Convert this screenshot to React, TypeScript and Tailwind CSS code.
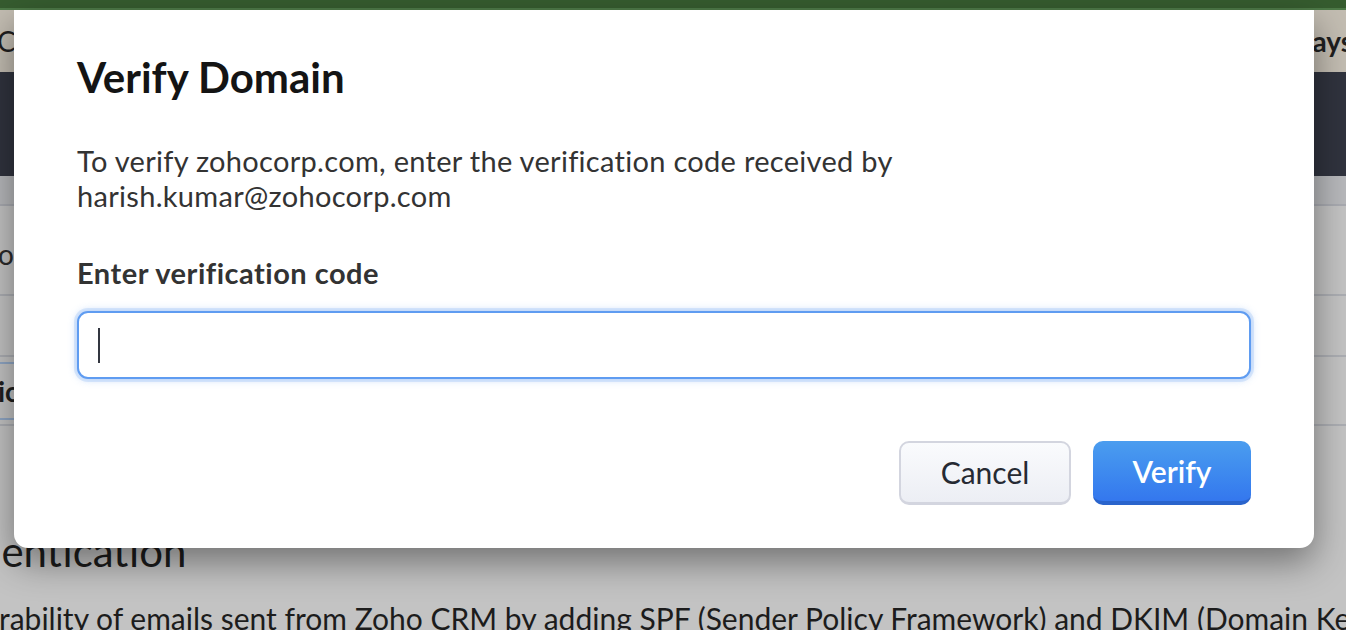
import React from "react";

export default function App() {
  return (
    <div className="relative h-[630px] w-full overflow-hidden bg-[#c3c3c3] font-[Lato,sans-serif]">
      {/* background page */}
      <div className="h-[8px] bg-[#365c2f]" />
      <div className="h-[2px] bg-[#4e7a48]" />
      <div className="flex h-[62px] items-center justify-between bg-[#c3bdb2] text-[#1f1f1f]">
        <span className="-ml-[3px] text-[28px] leading-none">CRM</span>
        <span className="-mr-[7px] text-[28px] font-bold leading-none">Days</span>
      </div>
      <div className="h-[104px] bg-[#30333e]" />
      <div className="h-[30px] border-b-2 border-[#a9abb1] bg-[#b7b8bb]" />
      <div className="flex h-[90px] items-center border-b-2 border-[#acaeb3] pt-[8px] text-[28px] text-[#2a2a2a]">
        <span className="-ml-[2px]">o</span>
      </div>
      <div className="h-[61px] border-b-2 border-[#acaeb3]" />
      <div className="mt-[5px] flex h-[58px] w-[120px] items-center border-y-2 border-[#8fa6c4] text-[28px] font-bold text-[#1f1f1f]">
        <span className="-ml-[2px]">ic</span>
      </div>
      <div className="mt-[4px] h-[2px] bg-[#acaeb3]" />
      <div className="mt-[104px] whitespace-nowrap text-[42px] leading-none text-[#1c1c1c]">
        <span className="-ml-[22px] inline-block">hentication</span>
      </div>
      <div className="mt-[31px] whitespace-nowrap text-[30px] leading-none text-[#1c1c1c]">
        <span className="-ml-[1px] inline-block">
          rability of emails sent from Zoho CRM by adding SPF (Sender Policy Framework) and DKIM (Domain Keys Identified Mail)
        </span>
      </div>

      {/* modal */}
      <div className="absolute left-[14px] top-[10px] w-[1300px] rounded-b-[14px] bg-white px-[63px] pb-[43px] pt-[43px] shadow-[0_14px_36px_rgba(0,0,0,0.42)]">
        <h1 className="text-[42px] font-bold leading-[48px] text-[#141414]">Verify Domain</h1>
        <p className="mt-[42px] text-[29px] leading-[35px] tracking-[0.3px] text-[#333333]">
          To verify zohocorp.com, enter the verification code received by
          <br />
          harish.kumar@zohocorp.com
        </p>
        <div className="mt-[42px] text-[29px] font-bold leading-[35px] tracking-[0.5px] text-[#333333]">
          Enter verification code
        </div>
        <div className="mt-[21px] flex h-[68px] items-center rounded-[11px] border-2 border-[#5f9cf1] bg-white pl-[19px] shadow-[0_0_0_3px_rgba(95,156,241,0.18),0_0_8px_rgba(95,156,241,0.45)]">
          <span className="block h-[35px] w-[2px] bg-[#333640]" />
        </div>
        <div className="mt-[62px] flex justify-end gap-[22px]">
          <button className="flex h-[64px] w-[172px] items-center justify-center rounded-[10px] border-2 border-b-[3px] border-[#d3d5df] bg-gradient-to-b from-[#fafbfd] to-[#eceef4] text-[30px] text-[#262a33]">
            Cancel
          </button>
          <button className="flex h-[64px] w-[158px] items-center justify-center rounded-[10px] border-b-[4px] border-[#2a64cc] bg-gradient-to-b from-[#4b9def] to-[#3477ee] text-[30px] font-semibold text-white">
            Verify
          </button>
        </div>
      </div>
    </div>
  );
}
